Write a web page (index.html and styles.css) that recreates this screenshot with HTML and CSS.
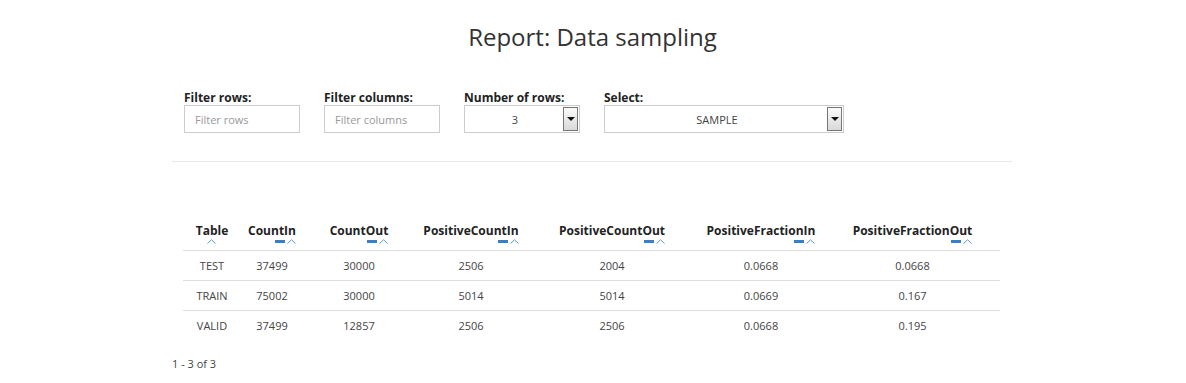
FILE: index.html
```html
<!DOCTYPE html>
<html lang="en">
<head>
    <meta charset="UTF-8">
    <title>Report: Data sampling</title>
    <link rel="stylesheet" href="styles.css">
</head>
<body>
    <div class="page">
        <h1>Report: Data sampling</h1>

        <div class="filters">
            <div class="filter">
                <label>Filter rows:</label>
                <input type="text" class="text-input" placeholder="Filter rows">
            </div>
            <div class="filter">
                <label>Filter columns:</label>
                <input type="text" class="text-input" placeholder="Filter columns">
            </div>
            <div class="filter">
                <label>Number of rows:</label>
                <div class="combo small">
                    <span class="combo-value">3</span>
                    <span class="combo-btn"><span class="arrow"></span></span>
                </div>
            </div>
            <div class="filter">
                <label>Select:</label>
                <div class="combo wide">
                    <span class="combo-value">SAMPLE</span>
                    <span class="combo-btn"><span class="arrow"></span></span>
                </div>
            </div>
        </div>

        <hr class="divider">

        <table class="report">
            <colgroup>
                <col style="width:58px">
                <col style="width:62px">
                <col style="width:112px">
                <col style="width:112px">
                <col style="width:170px">
                <col style="width:128px">
                <col style="width:175px">
            </colgroup>
            <thead>
                <tr>
                    <th><span class="th-label">Table<span class="sort only"><svg class="chev" viewBox="0 0 9 5"><polyline points="0.5,4.5 4.5,0.8 8.5,4.5"/></svg></span></span></th>
                    <th><span class="th-label">CountIn<span class="sort"><span class="bar"></span><svg class="chev" viewBox="0 0 9 5"><polyline points="0.5,4.5 4.5,0.8 8.5,4.5"/></svg></span></span></th>
                    <th><span class="th-label">CountOut<span class="sort"><span class="bar"></span><svg class="chev" viewBox="0 0 9 5"><polyline points="0.5,4.5 4.5,0.8 8.5,4.5"/></svg></span></span></th>
                    <th><span class="th-label">PositiveCountIn<span class="sort"><span class="bar"></span><svg class="chev" viewBox="0 0 9 5"><polyline points="0.5,4.5 4.5,0.8 8.5,4.5"/></svg></span></span></th>
                    <th><span class="th-label">PositiveCountOut<span class="sort"><span class="bar"></span><svg class="chev" viewBox="0 0 9 5"><polyline points="0.5,4.5 4.5,0.8 8.5,4.5"/></svg></span></span></th>
                    <th><span class="th-label">PositiveFractionIn<span class="sort"><span class="bar"></span><svg class="chev" viewBox="0 0 9 5"><polyline points="0.5,4.5 4.5,0.8 8.5,4.5"/></svg></span></span></th>
                    <th><span class="th-label">PositiveFractionOut<span class="sort"><span class="bar"></span><svg class="chev" viewBox="0 0 9 5"><polyline points="0.5,4.5 4.5,0.8 8.5,4.5"/></svg></span></span></th>
                </tr>
            </thead>
            <tbody>
                <tr>
                    <td>TEST</td><td>37499</td><td>30000</td><td>2506</td><td>2004</td><td>0.0668</td><td>0.0668</td>
                </tr>
                <tr>
                    <td>TRAIN</td><td>75002</td><td>30000</td><td>5014</td><td>5014</td><td>0.0669</td><td>0.167</td>
                </tr>
                <tr>
                    <td>VALID</td><td>37499</td><td>12857</td><td>2506</td><td>2506</td><td>0.0668</td><td>0.195</td>
                </tr>
            </tbody>
        </table>

        <div class="pager">1 - 3 of 3</div>
    </div>
</body>
</html>
```

FILE: styles.css
```css
* {
    margin: 0;
    padding: 0;
    box-sizing: border-box;
}

body {
    font-family: 'Open Sans', 'Liberation Sans', sans-serif;
    background: #fff;
    color: #333;
}

.page {
    width: 840px;
    margin: 0 0 0 172px;
}

h1 {
    font-size: 24px;
    font-weight: normal;
    text-align: center;
    color: #333;
    padding-top: 21px;
    line-height: 32px;
    margin-left: 1px;
}

.filters {
    display: flex;
    gap: 24px;
    margin-top: 37px;
    padding-left: 12px;
}

.filter {
    display: flex;
    flex-direction: column;
    width: 116px;
}

.filter:last-child {
    width: 240px;
}

.filter label {
    font-size: 12px;
    font-weight: bold;
    color: #222;
    line-height: 15px;
    height: 15px;
}

.text-input {
    width: 116px;
    height: 28px;
    border: 1px solid #ccc;
    padding: 0 10px;
    font-family: inherit;
    font-size: 11px;
    color: #555;
    outline: none;
}

.text-input::placeholder {
    color: #999;
}

.combo {
    height: 28px;
    border: 1px solid #ccc;
    display: flex;
    align-items: center;
    font-size: 11px;
    color: #444;
}

.combo.small { width: 116px; }
.combo.wide { width: 240px; }

.combo-value {
    flex: 1;
    text-align: center;
    padding-left: 2px;
}

.combo-btn {
    width: 15px;
    height: 24px;
    margin-right: 1px;
    border: 1px solid #777;
    background: linear-gradient(#fbfbfb, #d9d9d9);
    display: flex;
    align-items: center;
    justify-content: center;
}

.arrow {
    width: 0;
    height: 0;
    border-left: 4px solid transparent;
    border-right: 4px solid transparent;
    border-top: 4px solid #111;
}

.divider {
    border: none;
    border-top: 1px solid #e8e8e8;
    margin-top: 28px;
}

.report {
    border-collapse: collapse;
    margin: 59px 0 0 11px;
    table-layout: fixed;
    width: 817px;
    font-size: 11px;
}

.report th {
    font-size: 12px;
    font-weight: bold;
    color: #222;
    text-align: center;
    height: 29px;
    vertical-align: top;
    padding-top: 1px;
    border-bottom: 1px solid #ddd;
}

.th-label {
    position: relative;
    display: inline-block;
}

.sort {
    position: absolute;
    right: 0;
    top: 17px;
    display: flex;
    align-items: center;
    gap: 2px;
}

.sort.only {
    right: auto;
    left: 50%;
    margin-left: -5px;
}

.bar {
    width: 10px;
    height: 3px;
    background: #3d7dc4;
}

.chev {
    width: 9px;
    height: 5px;
    fill: none;
    stroke: #5b96d2;
    stroke-width: 1;
}

.report td {
    text-align: center;
    color: #444;
    height: 30px;
    border-bottom: 1px solid #ddd;
}

.report tbody tr:last-child td {
    border-bottom: none;
}

.pager {
    font-size: 11px;
    color: #444;
    margin-top: 16px;
}
```
